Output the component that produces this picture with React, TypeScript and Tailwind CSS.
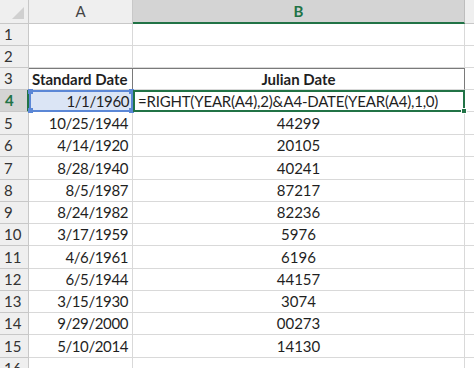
import React from 'react'

const rows: { a: string; b: string; h: number }[] = [
  { a: '', b: '', h: 22 },
  { a: '', b: '', h: 22 },
  { a: 'Standard Date', b: 'Julian Date', h: 22 },
  { a: '1/1/1960', b: '=RIGHT(YEAR(A4),2)&A4-DATE(YEAR(A4),1,0)', h: 22 },
  { a: '10/25/1944', b: '44299', h: 23 },
  { a: '4/14/1920', b: '20105', h: 22 },
  { a: '8/28/1940', b: '40241', h: 23 },
  { a: '8/5/1987', b: '87217', h: 22 },
  { a: '8/24/1982', b: '82236', h: 22 },
  { a: '3/17/1959', b: '5976', h: 22 },
  { a: '4/6/1961', b: '6196', h: 23 },
  { a: '6/5/1944', b: '44157', h: 22 },
  { a: '3/15/1930', b: '3074', h: 22 },
  { a: '9/29/2000', b: '00273', h: 22 },
  { a: '5/10/2014', b: '14130', h: 23 },
  { a: '', b: '', h: 22 },
]

const font = { fontFamily: 'Lato, "Open Sans", sans-serif' }

export default function App() {
  return (
    <div className="w-[474px] h-[368px] overflow-hidden bg-white text-[#1f1f1f]" style={font}>
      {/* column headers */}
      <div className="flex h-[24px]">
        <div className="relative w-[29px] shrink-0 bg-[#efefef] border-r border-b border-[#c8c8c8]">
          <svg className="absolute right-[4px] bottom-[4px]" width="12" height="12" viewBox="0 0 12 12">
            <polygon points="12,0 12,12 0,12" fill="#d0d0d0" />
          </svg>
        </div>
        <div className="w-[104px] shrink-0 flex items-center justify-center bg-[#efefef] border-r border-b border-[#c8c8c8] text-[15px] text-[#444]">
          A
        </div>
        <div className="w-[332px] shrink-0 flex items-center justify-center bg-[#d4d4d4] border-r border-[#bdbdbd] border-b-2 border-b-[#217346] text-[15px] font-bold text-[#217346]">
          B
        </div>
        <div className="flex-1 bg-[#efefef] border-b border-[#c8c8c8]" />
      </div>

      {rows.map((r, i) => {
        const n = i + 1
        const active = n === 4
        const head = n === 3
        return (
          <div key={n} className="flex" style={{ height: r.h }}>
            <div
              className={
                active
                  ? 'w-[29px] shrink-0 flex items-center pl-[5px] bg-[#d4d4d4] border-r-2 border-r-[#217346] border-b border-b-[#c8c8c8] text-[15px] text-[#217346] font-bold'
                  : 'w-[29px] shrink-0 flex items-center pl-[4px] bg-[#efefef] border-r border-b border-[#c8c8c8] text-[15px] text-[#333]'
              }
            >
              {n}
            </div>

            {active ? (
              <div className="relative w-[104px] shrink-0 flex items-center justify-end pr-[2px] bg-[#dbe5f5] border-2 border-[#5b87d6] text-[15px] tracking-[-0.4px]">
                {r.a}
                <span className="absolute -left-[3px] -top-[3px] w-[5px] h-[5px] bg-[#5b87d6]" />
                <span className="absolute -right-[3px] -top-[3px] w-[5px] h-[5px] bg-[#5b87d6]" />
                <span className="absolute -left-[3px] -bottom-[3px] w-[5px] h-[5px] bg-[#5b87d6]" />
                <span className="absolute -right-[3px] -bottom-[3px] w-[5px] h-[5px] bg-[#5b87d6]" />
              </div>
            ) : (
              <div
                className={
                  head
                    ? 'w-[104px] shrink-0 flex items-center pl-[3px] border-r border-r-[#7a7a7a] border-t border-t-[#7a7a7a] border-b border-b-[#d9d9d9] text-[15px] font-bold whitespace-nowrap'
                    : 'w-[104px] shrink-0 flex items-center justify-end pr-[4px] border-r border-b border-[#d9d9d9] text-[15px] tracking-[-0.4px]'
                }
              >
                {r.a}
              </div>
            )}

            {active ? (
              <div className="relative w-[332px] shrink-0 flex items-center pl-[3px] border-2 border-[#217346] text-[15px] tracking-[-0.2px] whitespace-nowrap">
                {r.b}
                <span className="absolute -right-[4px] -bottom-[4px] w-[6px] h-[6px] bg-[#217346] border border-white" />
              </div>
            ) : (
              <div
                className={
                  head
                    ? 'w-[332px] shrink-0 flex items-center justify-center border-r border-r-[#7a7a7a] border-t border-t-[#7a7a7a] border-b border-b-[#d9d9d9] text-[15px] font-bold'
                    : 'w-[332px] shrink-0 flex items-center justify-center border-r border-b border-[#d9d9d9] text-[15px]'
                }
              >
                {r.b}
              </div>
            )}

            <div className="flex-1 border-b border-[#d9d9d9]" />
          </div>
        )
      })}
    </div>
  )
}
